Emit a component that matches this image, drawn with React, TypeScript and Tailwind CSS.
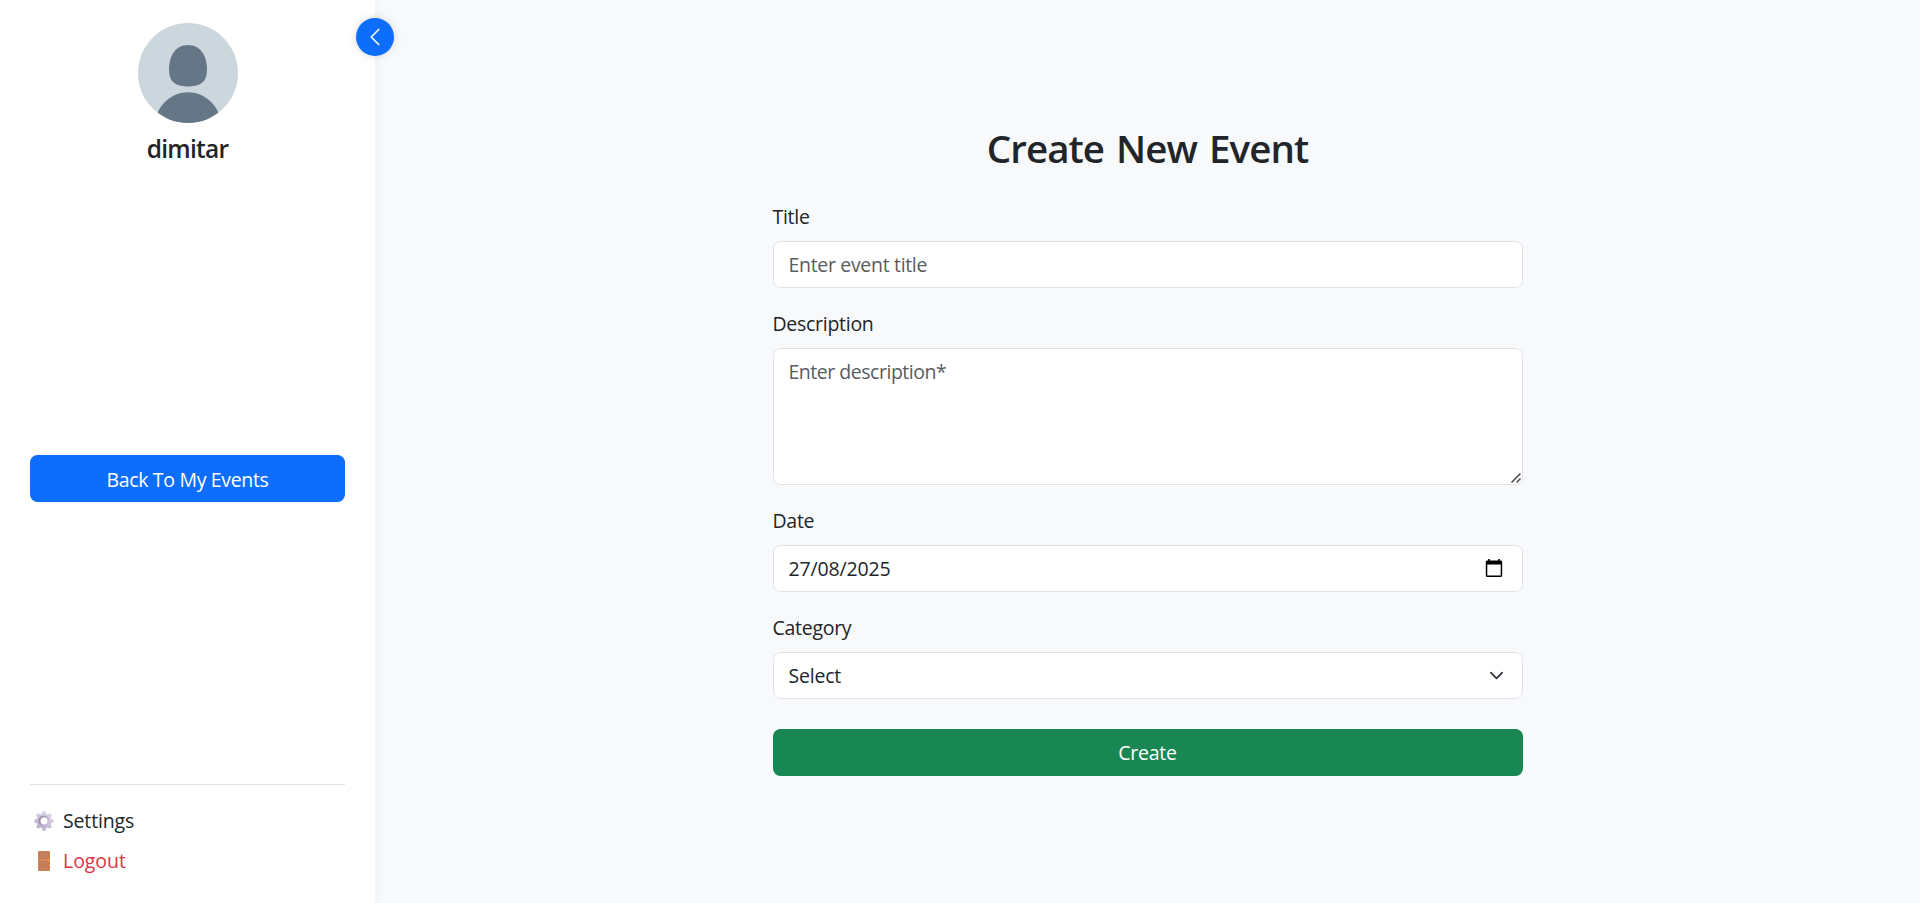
import type { ReactNode } from 'react';

function Avatar() {
  return (
    <svg viewBox="0 0 100 100" className="size-[100px] shrink-0">
      <defs>
        <clipPath id="avatar-clip">
          <circle cx="50" cy="50" r="50" />
        </clipPath>
      </defs>
      <g clipPath="url(#avatar-clip)">
        <rect width="100" height="100" fill="#ccd6dd" />
        <path
          d="M50 22C62.500 22 69 33 69 46.500C69 58.500 63 63.500 50 63.500C37 63.500 31 58.500 31 46.500C31 33 37.500 22 50 22Z"
          fill="#657786"
        />
        <path d="M17 100C19 82 33.500 69.300 50 69.300C66.500 69.300 81 82 83 100Z" fill="#657786" />
      </g>
    </svg>
  );
}

function GearIcon() {
  const teeth = [0, 45, 90, 135, 180, 225, 270, 315];
  return (
    <svg viewBox="0 0 20 20" className="size-5 shrink-0">
      <defs>
        <linearGradient id="gear-body" gradientUnits="userSpaceOnUse" x1="15" y1="2" x2="5" y2="18">
          <stop offset="0" stopColor="#dcd5e6" />
          <stop offset="1" stopColor="#bdb0ce" />
        </linearGradient>
        <linearGradient id="gear-ring" x1="0" y1="0.300" x2="1" y2="0.700">
          <stop offset="0" stopColor="#978ba6" />
          <stop offset="1" stopColor="#cdc2da" />
        </linearGradient>
      </defs>
      <g fill="url(#gear-body)">
        {teeth.map((angle) => (
          <circle
            key={angle}
            cx={10 + 7.9 * Math.cos((angle * Math.PI) / 180)}
            cy={10 + 7.9 * Math.sin((angle * Math.PI) / 180)}
            r="2"
          />
        ))}
        <circle cx="10" cy="10" r="7.600" />
      </g>
      <circle cx="10" cy="10" r="4.500" fill="none" stroke="url(#gear-ring)" strokeWidth="2.200" />
      <circle cx="10" cy="10" r="3.400" fill="#ffffff" />
    </svg>
  );
}

function DoorIcon() {
  return (
    <svg viewBox="0 0 20 20" className="size-5 shrink-0">
      <rect x="4" y="0" width="12" height="20" rx="0.700" fill="#d08758" />
      <rect x="5.500" y="1.500" width="9" height="6.500" fill="#c67f5f" stroke="#b9754f" strokeWidth="0.600" />
      <rect x="5.500" y="10.500" width="9" height="3.400" fill="#c67f5f" stroke="#b9754f" strokeWidth="0.600" />
      <rect x="5.500" y="15.500" width="9" height="3" fill="#c67f5f" stroke="#b9754f" strokeWidth="0.600" />
      <rect x="5" y="8.500" width="10.500" height="1.200" fill="#e0915a" />
      <circle cx="14.500" cy="9.700" r="0.900" fill="#f2a24f" />
    </svg>
  );
}

function Field({ label, children }: { label: string; children: ReactNode }) {
  return (
    <div className="mb-5 flex flex-col">
      <label className="mb-[9px] h-[30px] pt-px leading-[30px] box-content">{label}</label>
      {children}
    </div>
  );
}

export default function App() {
  return (
    <div className="flex h-[903px] w-full overflow-hidden bg-[#f8f9fb] font-['Open_Sans','Noto_Sans',sans-serif] text-[19.5px] leading-[30px] tracking-[-0.28px] text-[#212529]">
      <aside className="relative flex w-[375px] shrink-0 flex-col bg-white px-[30px] shadow-[2px_0_10px_rgba(0,0,0,0.03)]">
        <div className="flex flex-col items-center pt-[23px]">
          <Avatar />
          <h5 className="mt-[11px] text-[24.5px] font-semibold leading-[30px] tracking-[-0.75px]">dimitar</h5>
        </div>
        <button className="mt-[291px] h-[47px] w-full rounded-[7.5px] bg-[#0d6efd] pt-0.5 tracking-[-0.33px] text-white">
          Back To My Events
        </button>
        <nav className="mt-[282px] flex flex-col gap-2.5 border-t border-[#dee2e6] pt-[21px]">
          <a className="flex h-[30px] items-center pl-[3.5px]">
            <GearIcon />
            <span className="ml-[9.5px] tracking-[-0.15px]">Settings</span>
          </a>
          <a className="flex h-[30px] items-center pl-[3.5px] text-[#dc3545]">
            <DoorIcon />
            <span className="ml-[9.5px] tracking-[-0.05px]">Logout</span>
          </a>
        </nav>
        <button
          aria-label="Collapse sidebar"
          className="absolute top-[18px] left-[356px] flex size-[38px] items-center justify-center rounded-full bg-[#0d6efd] text-white shadow-[0_0_8px_rgba(0,0,0,0.15)]"
        >
          <svg viewBox="0 0 16 16" className="size-5" fill="currentColor" stroke="currentColor" strokeWidth="0.200">
            <path
              fillRule="evenodd"
              d="M11.354 1.646a.5.5 0 0 1 0 .708L5.707 8l5.647 5.646a.5.5 0 0 1-.708.708l-6-6a.5.5 0 0 1 0-.708l6-6a.5.5 0 0 1 .708 0"
            />
          </svg>
        </button>
      </aside>

      <main className="flex flex-1 justify-center pt-[124px]">
        <form className="flex w-[750px] flex-col">
          <h2 className="mb-[29px] h-12 text-center text-[38.5px] font-semibold leading-[48px] tracking-[-0.95px] [word-spacing:3px]">
            Create New Event
          </h2>
          <Field label="Title">
            <input
              placeholder="Enter event title"
              className="h-[47px] rounded-[7.5px] border border-[#dee2e6] bg-white px-[15px] tracking-[-0.32px] placeholder:text-[#595c5f] placeholder:opacity-100"
            />
          </Field>
          <Field label="Description">
            <div className="relative flex">
              <textarea
                placeholder="Enter description*"
                className="h-[137px] w-full resize-none rounded-[7.5px] border border-[#dee2e6] bg-white px-[15px] py-2 tracking-[-0.48px] placeholder:text-[#595c5f] placeholder:opacity-100"
              />
              <svg viewBox="0 0 10 10" className="absolute right-[2px] bottom-[2px] size-[10px]" stroke="#444" strokeWidth="1.500">
                <path d="M0.500 9.500L9.500 0.500M5.500 9.500L9.500 5.500" />
              </svg>
            </div>
          </Field>
          <Field label="Date">
            <div className="flex h-[47px] items-center justify-between rounded-[7.5px] border border-[#dee2e6] bg-white pr-[19px] pl-[15px]">
              <span className="tracking-[-0.15px]">27/08/2025</span>
              <svg viewBox="0 0 18 19" className="h-[19px] w-[18px]">
                <path d="M4 0V3M14 0V3" stroke="#000" strokeWidth="1.600" />
                <path
                  fillRule="evenodd"
                  d="M2 1.500H16A1.500 1.500 0 0 1 17.200 3V16.500A1.500 1.500 0 0 1 16 18H2A1.500 1.500 0 0 1 0.800 16.500V3A1.500 1.500 0 0 1 2 1.500ZM2.300 5.500V16.400H15.700V5.500Z"
                />
              </svg>
            </div>
          </Field>
          <Field label="Category">
            <div className="flex h-[47px] items-center justify-between rounded-[7.5px] border border-[#dee2e6] bg-white pr-[17.500px] pl-[15px]">
              <span className="tracking-[-0.2px]">Select</span>
              <svg viewBox="0 0 16 16" className="h-[15px] w-[15px]" fill="none" stroke="#343a40" strokeWidth="2" strokeLinecap="round" strokeLinejoin="round">
                <path d="m2 5 6 6 6-6" />
              </svg>
            </div>
          </Field>
          <button type="button" className="mt-2.5 h-[47px] rounded-[7.5px] bg-[#198754] pt-px text-white">
            Create
          </button>
        </form>
      </main>
    </div>
  );
}
